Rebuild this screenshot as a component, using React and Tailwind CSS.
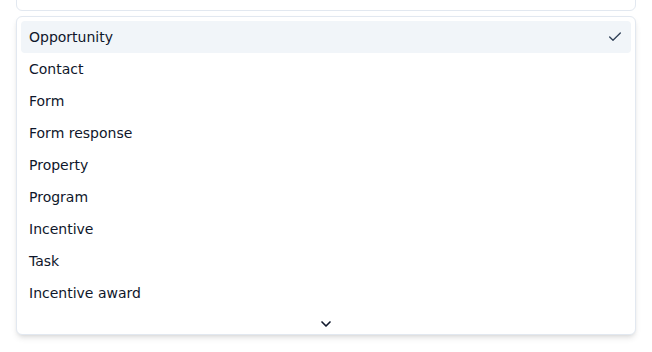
import { Check, ChevronDown } from "lucide-react"

const options = [
  "Opportunity",
  "Contact",
  "Form",
  "Form response",
  "Property",
  "Program",
  "Incentive",
  "Task",
  "Incentive award",
]

export default function App() {
  const selected = "Opportunity"

  return (
    <div className="w-[652px] h-[352px] bg-white px-4 overflow-hidden" style={{ fontFamily: '"DejaVu Sans", sans-serif' }}>
      {/* Trigger (cropped above) */}
      <div className="h-[9px] -mt-[30px] pt-[30px] box-content border border-slate-200 rounded-md" />

      {/* Dropdown content */}
      <div className="mt-[5px] h-[319px] border border-slate-200 rounded-md bg-white shadow-md flex flex-col overflow-hidden">
        <div className="p-1 flex flex-col">
          {options.map((opt) => (
            <div
              key={opt}
              className={`h-8 flex items-center justify-between pl-2 pr-2 rounded-sm text-sm text-slate-900 ${
                opt === selected ? "bg-slate-100" : ""
              }`}
            >
              <span>{opt}</span>
              {opt === selected && <Check className="w-4 h-4 text-slate-700" strokeWidth={2} />}
            </div>
          ))}
        </div>
        <div className="h-6 flex items-center justify-center">
          <ChevronDown className="w-4 h-4 text-slate-900" strokeWidth={2.5} />
        </div>
      </div>
    </div>
  )
}
